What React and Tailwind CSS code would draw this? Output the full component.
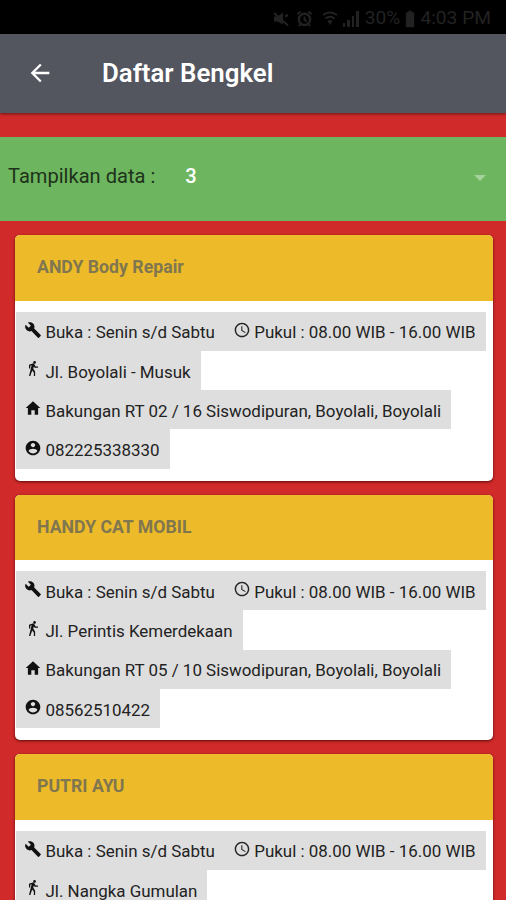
import { IoMdBuild, IoMdTime, IoMdHome, IoMdContact, IoMdWalk } from "react-icons/io";
import { MdArrowBack, MdBatteryFull } from "react-icons/md";

const bengkel = [
  {
    nama: "ANDY Body Repair",
    jalan: "Jl. Boyolali - Musuk",
    alamat: "Bakungan RT 02 / 16 Siswodipuran, Boyolali, Boyolali",
    telepon: "082225338330",
  },
  {
    nama: "HANDY CAT MOBIL",
    jalan: "Jl. Perintis Kemerdekaan",
    alamat: "Bakungan RT 05 / 10 Siswodipuran, Boyolali, Boyolali",
    telepon: "08562510422",
  },
  {
    nama: "PUTRI AYU",
    jalan: "Jl. Nangka Gumulan",
  },
];

function MuteIcon() {
  return (
    <svg viewBox="0 0 18 18" className="mr-[6px] size-[18px] fill-current stroke-current">
      <path d="M2 6.5h3.5L11 2.500v12L5.500 11.500H2z" stroke="none" />
      <path d="M2 3l14 12.500M13 6.500l3-1.500" strokeWidth="2" fill="none" />
    </svg>
  );
}

function AlarmIcon() {
  return (
    <svg viewBox="0 0 18 18" className="mr-[9px] size-[17px] fill-none stroke-current">
      <circle cx="9" cy="10" r="6" strokeWidth="2.500" />
      <path d="M1.500 4.500l3.500-3M16.500 4.500L13 1.500M3 17l2-2M15 17l-2-2M9 7v3.500l2.500 1.500" strokeWidth="2" />
    </svg>
  );
}

function WifiIcon() {
  return (
    <svg viewBox="0 0 16 18" className="mr-[5px] h-[18px] w-[16px] fill-none stroke-current">
      <path d="M1 5q7-5 14 0M3.500 8.500q4.500-3.500 9 0" strokeWidth="2" />
      <path d="M5.500 11q2.500-2 5 0L8 15z" fill="currentColor" stroke="none" />
    </svg>
  );
}

function Info({ icon: Icon, iconClass = "size-[18px]", children }) {
  return (
    <div className="flex h-[39.3px] w-fit items-center bg-[#dedede] pr-[10px] pl-[8px] whitespace-nowrap">
      <span className="mr-[3.5px] mb-[3px] flex w-[18px] shrink-0 justify-center text-[#111]">
        <Icon className={iconClass} />
      </span>
      <span className="mt-[2.5px] leading-[20px]">{children}</span>
    </div>
  );
}

function Card({ data }) {
  return (
    <div className="h-[245.5px] shrink-0 overflow-hidden rounded-[5px] bg-white shadow-[0_1px_3px_rgba(60,0,0,0.8)]">
      <div className="flex h-[65.5px] items-center bg-[#edbb29] pl-[22.5px] text-[17.7px] font-bold text-[#80764f]">
        {data.nama}
      </div>
      <div className="pt-[11px] pl-[1.5px] text-[16.93px] text-[#222]">
        <div className="flex">
          <Info icon={IoMdBuild}>Buka : Senin s/d Sabtu</Info>
          <Info icon={IoMdTime}>Pukul : 08.00 WIB - 16.00 WIB</Info>
        </div>
        <Info icon={IoMdWalk} iconClass="size-[17px]">{data.jalan}</Info>
        {data.alamat && <Info icon={IoMdHome}>{data.alamat}</Info>}
        {data.telepon && <Info icon={IoMdContact}>{data.telepon}</Info>}
      </div>
    </div>
  );
}

export default function App() {
  return (
    <div className="flex h-[900px] w-[506px] flex-col overflow-hidden bg-[#d02b2a] font-['Roboto',sans-serif]">
      {/* Status bar */}
      <div className="flex h-[34px] shrink-0 items-center justify-end bg-black pt-[3px] pr-[15px] text-[19.2px] text-[#222]">
        <MuteIcon />
        <AlarmIcon />
        <WifiIcon />
        <div className="mr-[6px] flex h-[17px] items-end gap-[2px]">
          <span className="h-[4px] w-[2.5px] bg-[#222]" />
          <span className="h-[7px] w-[2.5px] bg-[#222]" />
          <span className="h-[11px] w-[2.5px] bg-[#222]" />
          <span className="h-[16px] w-[2.5px] bg-[#222]" />
        </div>
        <span>30%</span>
        <MdBatteryFull className="size-[20px]" />
        <span>4:03 PM</span>
      </div>

      {/* Header */}
      <div className="z-10 flex h-[78.5px] shrink-0 items-center bg-[#53555f] pl-[26px] text-white shadow-[0_1px_3px_rgba(0,0,0,0.5)]">
        <MdArrowBack className="size-[28px]" />
        <h1 className="ml-[48px] text-[25.8px] font-semibold">Daftar Bengkel</h1>
      </div>

      {/* Filter */}
      <div className="mt-[24px] flex h-[84.5px] shrink-0 items-center bg-[#6db55e] pr-[20px] pb-[6px] pl-[8px] text-[20.1px] text-[#1d321a]">
        <span>Tampilkan data :</span>
        <span className="ml-[30px] font-medium text-white">3</span>
        <svg viewBox="0 0 12 6" className="mt-[4px] ml-auto h-[6px] w-[12px] fill-[#a5d29c]">
          <path d="M0 0h12L6 6z" />
        </svg>
      </div>

      <div className="mt-[14px] flex flex-col gap-[14px] pr-[13.5px] pl-[14.5px]">
        {bengkel.map((item) => (
          <Card key={item.nama} data={item} />
        ))}
      </div>
    </div>
  );
}
